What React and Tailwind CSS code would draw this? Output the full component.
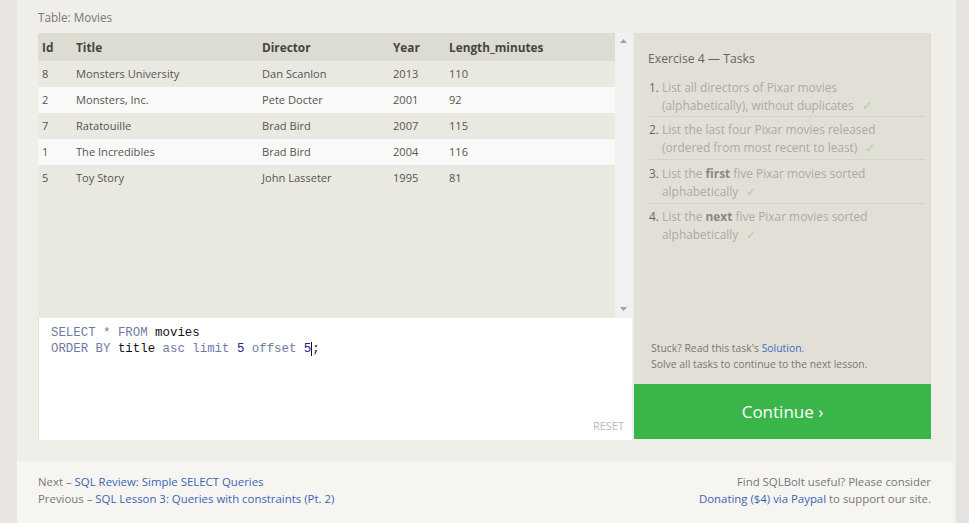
import React from "react";

const rows = [
  ["8", "Monsters University", "Dan Scanlon", "2013", "110"],
  ["2", "Monsters, Inc.", "Pete Docter", "2001", "92"],
  ["7", "Ratatouille", "Brad Bird", "2007", "115"],
  ["1", "The Incredibles", "Brad Bird", "2004", "116"],
  ["5", "Toy Story", "John Lasseter", "1995", "81"],
];

function Check() {
  return <span className="ml-2 text-[#a5d3a5]">✓</span>;
}

export default function App() {
  return (
    <div
      className="flex w-[969px] h-[523px] bg-[#e8e5e2] overflow-hidden"
      style={{ fontFamily: '"Open Sans", sans-serif' }}
    >
      <div className="w-[17px] shrink-0" />
      <div className="w-[936px] shrink-0 flex flex-col bg-[#f0eee8]">
        <div className="px-[21px] pr-[22px]">
          <div className="h-[33px] flex items-center text-[11.7px] text-[#777] pt-0.5">Table: Movies</div>
          <div className="flex gap-[2px]">
            {/* left */}
            <div className="w-[594px] flex flex-col">
              <div className="h-[284px] flex bg-[#e9e8e1]">
                <div className="flex-1">
                  <div className="h-[28px] flex items-center bg-[#dddcd2] text-[11.8px] font-bold text-[#444] pt-[1px]">
                    <div className="w-[38px] pl-[4px]">Id</div>
                    <div className="w-[186px]">Title</div>
                    <div className="w-[131px]">Director</div>
                    <div className="w-[56px]">Year</div>
                    <div>Length_minutes</div>
                  </div>
                  {rows.map((r, i) => (
                    <div
                      key={i}
                      className={`h-[26px] flex items-center text-[11.1px] text-[#555] ${i % 2 === 1 ? "bg-[#f9f9f8]" : ""}`}
                    >
                      <div className="w-[38px] pl-[4px]">{r[0]}</div>
                      <div className="w-[186px]">{r[1]}</div>
                      <div className="w-[131px]">{r[2]}</div>
                      <div className="w-[56px]">{r[3]}</div>
                      <div>{r[4]}</div>
                    </div>
                  ))}
                </div>
                <div className="w-[17px] bg-[#f1f1f1] flex flex-col items-center justify-between py-[6px]">
                  <svg width="7" height="4" viewBox="0 0 7 4"><path d="M0 4 L3.5 0 L7 4Z" fill="#a3a3a3" /></svg>
                  <svg width="7" height="4" viewBox="0 0 7 4"><path d="M0 0 L3.5 4 L7 0Z" fill="#a3a3a3" /></svg>
                </div>
              </div>
              <div className="h-[122px] mt-[1px] bg-white relative border-l border-[#e0ded8]">
                <div
                  className="pt-[7px] pl-[12px] text-[12.4px] leading-[16px]"
                  style={{ fontFamily: '"Liberation Mono", "DejaVu Sans Mono", monospace' }}
                >
                  <div>
                    <span className="text-[#6f7ba3]">SELECT</span>
                    <span className="text-[#6f7ba3]"> * </span>
                    <span className="text-[#6f7ba3]">FROM</span>
                    <span className="text-[#111]"> movies</span>
                  </div>
                  <div>
                    <span className="text-[#6f7ba3]">ORDER BY</span>
                    <span className="text-[#111]"> title </span>
                    <span className="text-[#6f7ba3]">asc limit</span>
                    <span className="text-[#22229a]"> 5 </span>
                    <span className="text-[#6f7ba3]">offset</span>
                    <span className="text-[#22229a]"> 5</span>
                    <span className="border-l border-[#111] text-[#111]">;</span>
                  </div>
                </div>
                <div className="absolute right-[8px] bottom-[6px] text-[11px] text-[#bbb]">RESET</div>
              </div>
            </div>
            {/* right */}
            <div className="w-[297px] flex flex-col">
              <div className="h-[351px] bg-[#e2e0d6] flex flex-col justify-between pl-[14px] pr-[6px]">
                <div>
                  <div className="pt-[17px] text-[12.2px] text-[#666]">Exercise 4 — Tasks</div>
                  <ol className="mt-[10px] text-[11.9px] leading-[18px] text-[#aaa]">
                    <li className="flex pb-[2px] border-b border-[#d5d3c9]">
                      <span className="w-[14px] shrink-0 text-[#666] pl-[1px]">1.</span>
                      <span>List all directors of Pixar movies (alphabetically), without duplicates<Check /></span>
                    </li>
                    <li className="flex pt-[3px] pb-[3px] border-b border-[#d5d3c9]">
                      <span className="w-[14px] shrink-0 text-[#666] pl-[1px]">2.</span>
                      <span>List the last four Pixar movies released (ordered from most recent to least)<Check /></span>
                    </li>
                    <li className="flex pt-[4px] pb-[3px] border-b border-[#d5d3c9]">
                      <span className="w-[14px] shrink-0 text-[#666] pl-[1px]">3.</span>
                      <span>List the <b className="text-[#888]">first</b> five Pixar movies sorted alphabetically<Check /></span>
                    </li>
                    <li className="flex pt-[3px]">
                      <span className="w-[14px] shrink-0 text-[#666] pl-[1px]">4.</span>
                      <span>List the <b className="text-[#888]">next</b> five Pixar movies sorted alphabetically<Check /></span>
                    </li>
                  </ol>
                </div>
                <div className="pb-[12px] pl-[3px] text-[10.4px] leading-[16px] text-[#777]">
                  <div>Stuck? Read this task's <span className="text-[#3c6bc4]">Solution</span>.</div>
                  <div>Solve all tasks to continue to the next lesson.</div>
                </div>
              </div>
              <div className="h-[55px] bg-[#3ab54a] flex items-center justify-center text-white text-[17px]">
                Continue ›
              </div>
            </div>
          </div>
        </div>
        <div className="mt-[21px] flex-1 bg-[#f6f5f2] flex justify-between px-[21px] pr-[22px] pt-[12px] text-[11.4px] leading-[17px] text-[#777]">
          <div>
            <div>Next – <span className="text-[#3c64b4]">SQL Review: Simple SELECT Queries</span></div>
            <div>Previous – <span className="text-[#3c64b4]">SQL Lesson 3: Queries with constraints (Pt. 2)</span></div>
          </div>
          <div className="text-right">
            <div>Find SQLBolt useful? Please consider</div>
            <div><span className="text-[#3c64b4]">Donating ($4) via Paypal</span> to support our site.</div>
          </div>
        </div>
      </div>
      <div className="flex-1 border-l-[3px] border-[#f2f0ee] bg-[#e6e3e1]" />
    </div>
  );
}
